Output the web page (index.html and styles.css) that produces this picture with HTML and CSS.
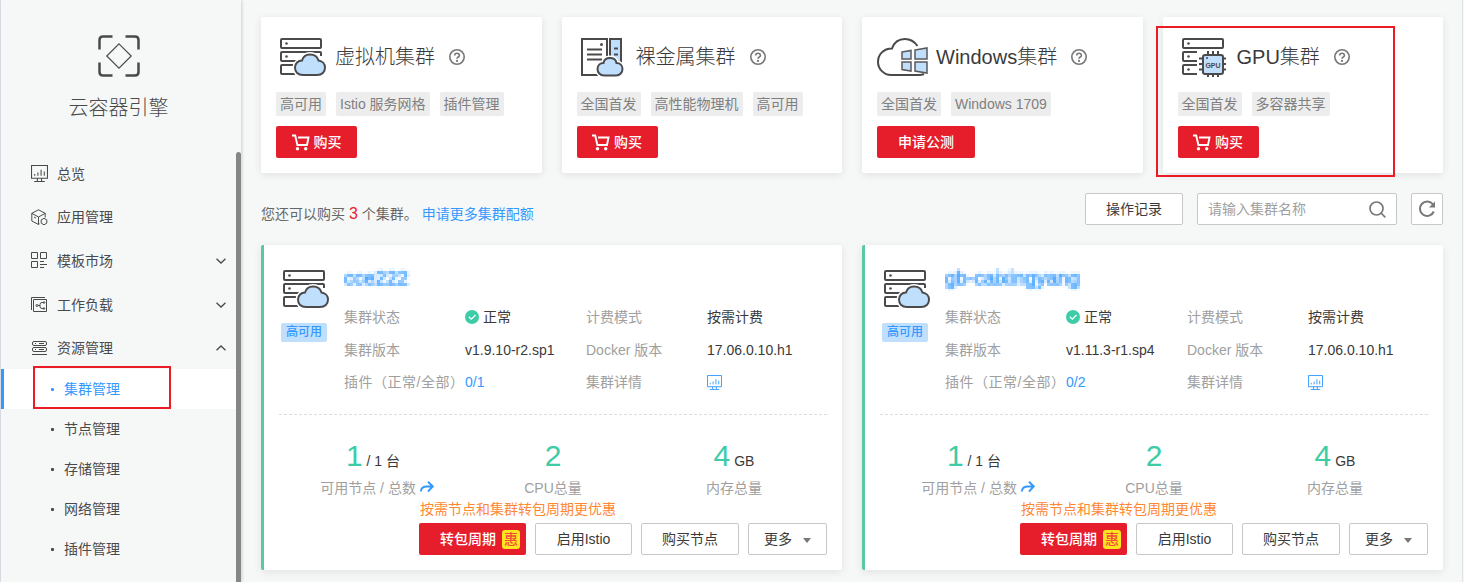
FILE: index.html
```html
<!DOCTYPE html>
<html lang="zh-CN">
<head>
<meta charset="utf-8">
<title>云容器引擎</title>
<link rel="stylesheet" href="styles.css">
</head>
<body>
<svg class="defs" width="0" height="0" aria-hidden="true">
  <filter id="mosaic" x="0" y="0" width="100%" height="100%" color-interpolation-filters="sRGB">
    <feGaussianBlur in="SourceGraphic" stdDeviation="0.8" result="soft"/>
    <feFlood x="1" y="1" width="1" height="1" flood-color="#000" result="dot"/>
    <feOffset in="dot" dx="0" dy="0" x="0" y="0" width="3" height="3"/>
    <feTile result="grid"/>
    <feComposite in="soft" in2="grid" operator="in"/>
    <feMorphology operator="dilate" radius="1"/>
  </filter>
  <symbol id="monitor" viewBox="0 0 16 16">
    <path d="M.5.5h15v12H.5zM6 12.500v2.500M10 12.500v2.500M3 15.500h10M3.500 10V8.500M6.500 10V7M9.500 10V4.500M12.500 10V6" fill="none" stroke="currentColor"/>
  </symbol>
  <symbol id="server-cloud" viewBox="0 0 47 39">
    <g fill="none" stroke="#4a4a4c" stroke-width="2">
      <rect x="2" y="1" width="40" height="9" rx="1"/>
      <path d="M18 23H3q-1 0-1-1v-7q0-1 1-1h38q1 0 1 1v3M14 27H3q-1 0-1 1v7q0 1 1 1h13"/>
    </g>
    <circle cx="7.500" cy="5.500" r="1.300" fill="#4a4a4c"/><circle cx="7.500" cy="18.500" r="1.300" fill="#4a4a4c"/>
    <path d="M24 37c-5 0-8-3-8-7.500 0-4 3-7 7-7 1-3.500 4-6 8-6 4.500 0 7.500 2.500 8.500 6 4 .5 6.500 3.500 6.500 7 0 4.500-3 7.500-8 7.500z" fill="#fff" stroke="#fff" stroke-width="5"/>
    <path d="M24 37c-5 0-8-3-8-7.500 0-4 3-7 7-7 1-3.500 4-6 8-6 4.500 0 7.500 2.500 8.500 6 4 .5 6.500 3.500 6.500 7 0 4.500-3 7.500-8 7.500z" fill="#c0dffd" stroke="#4a4a4c" stroke-width="2"/>
  </symbol>
  <symbol id="metal" viewBox="0 0 47 39">
    <path d="M2 1h25v36H2zM30 1h11v34H30z" fill="#fff" stroke="#4a4a4c" stroke-width="2"/>
    <path d="M31 2h9v32h-9z" fill="#c0dffd"/>
    <path d="M7 11.500h15M7 16.500h15M7 21.500h15M34 10.500h4M34 16.500h4" stroke="#4a4a4c" stroke-width="2"/>
    <circle cx="21.500" cy="6.500" r="1.500" fill="#4a4a4c"/>
    <path d="M24 37.500c-4 0-6.500-3-6.500-6.500s2.500-6 6-6c.5-3 3-5 6.500-5s6 2 6.500 5c3.500 0 6 2.500 6 6s-2.500 6.500-6.500 6.500z" fill="#fff" stroke="#fff" stroke-width="5"/>
    <path d="M24 37.500c-4 0-6.500-3-6.500-6.500s2.500-6 6-6c.5-3 3-5 6.500-5s6 2 6.500 5c3.500 0 6 2.500 6 6s-2.500 6.500-6.500 6.500z" fill="#c0dffd" stroke="#4a4a4c" stroke-width="2"/>
  </symbol>
  <symbol id="windows" viewBox="0 0 51 39">
    <path d="M47 36q-2 1-5 1H14C7 37 1 31 1 24c0-7 5-13.500 14-13.500C17 4.500 22 1 28 1c5 0 9 2 12.500 7" fill="none" stroke="#4a4a4c" stroke-width="2"/>
    <path d="M25 14l9-1.500V21h-9zM38 12l12-2v11H38zM25 24h9v9l-9-1.500zM38 24h12v11l-12-2z" fill="#c0dffd" stroke="#5a5a5c" stroke-width="1.500"/>
  </symbol>
  <symbol id="help" viewBox="0 0 16 16">
    <circle cx="8" cy="8" r="7.200" fill="none" stroke="#777" stroke-width="1.600"/>
    <path d="M5.700 6.500C5.700 3.500 10.500 3.500 10.400 6.400 10.400 8 8 8 8 9.800" fill="none" stroke="#777" stroke-width="1.600"/><circle cx="8" cy="11.900" r="1.100" fill="#777"/>
  </symbol>
  <symbol id="cart" viewBox="0 0 18 17">
    <path d="M0 1.500h3.200L5.400 11H15l1.500-7.500H6" fill="none" stroke="#fff" stroke-width="1.900"/><circle cx="5.500" cy="14.800" r="1.700" fill="#fff"/><circle cx="13.700" cy="14.800" r="1.700" fill="#fff"/>
  </symbol>
  <symbol id="chevron" viewBox="0 0 10 6"><path d="M.5.7L5 5 9.500.7" fill="none" stroke="#4a4a4c" stroke-width="1.300"/></symbol>
  <symbol id="check" viewBox="0 0 14 14"><circle cx="7" cy="7" r="7" fill="#3dcca6"/><path d="M3.800 6.800L6.300 9.200 10.500 5" fill="none" stroke="#fff" stroke-width="1.200"/></symbol>
  <symbol id="share" viewBox="0 0 14 12"><path d="M.9 10.500C1 6.500 4 5.500 7 5.500h5.500M8 .8l4.800 4.700L8 10.500" fill="none" stroke="#3399ff" stroke-width="1.900"/></symbol>
</svg>

<div class="page">
  <aside class="sidebar">
    <div class="brand">
      <svg width="42" height="42" viewBox="0 0 42 42" fill="none" stroke="#4a4a4c"><path d="M1.500 14.500V5q0-3.500 3.500-3.500h9.500M27.500 1.500H37q3.500 0 3.500 3.500v9.500M40.500 27.500V37q0 3.500-3.500 3.500h-9.500M14.500 40.500H5q-3.500 0-3.500-3.500v-9.500" stroke-width="2.500"/><path d="M21 8.800L33.200 21 21 33.200 8.800 21z" stroke-width="1.200"/></svg>
      <h1>云容器引擎</h1>
    </div>
    <nav class="menu">
      <a class="item"><svg width="17" height="17"><use href="#monitor"/></svg><span>总览</span></a>
      <a class="item"><svg width="17" height="17" viewBox="0 0 17 17" fill="none" stroke="#4a4a4c"><path d="M8.500 14.800L7.500 15.500.8 12V4.300L7.500.8l6.700 3.500v4.200M.8 4.300L7.500 8l6.700-3.700M7.500 8v7.500M3 8l2 1.200"/><path d="M13 9.300l2.800 1.600v3.200L13 15.800l-2.800-1.700v-3.200z"/></svg><span>应用管理</span></a>
      <a class="item"><svg width="17" height="17" viewBox="0 0 17 17" fill="none" stroke="#4a4a4c"><path d="M.5.500h6v6h-6zM9.500.500h6v6h-6zM.5 9.500h6v6h-6zM9 9.500h4M9 12.500h7M9 15.500h4"/></svg><span>模板市场</span><svg class="arrow" width="10" height="6"><use href="#chevron"/></svg></a>
      <a class="item"><svg width="17" height="17" viewBox="0 0 17 17" fill="none" stroke="#4a4a4c"><path d="M.5 14V1.500H14M2.500 3.500h13v12h-13zM7 9.500h2M13 6.500h-2q-2 0-2 2v2q0 2 2 2h2"/><circle cx="6" cy="9.500" r="1"/><circle cx="13" cy="6.500" r=".8"/><circle cx="13" cy="12.500" r=".8"/></svg><span>工作负载</span><svg class="arrow" width="10" height="6"><use href="#chevron"/></svg></a>
      <a class="item"><svg width="17" height="17" viewBox="0 0 17 17" fill="none" stroke="#4a4a4c"><rect x="1.500" y="1.500" width="14" height="4" rx="1.500"/><rect x="1.500" y="7.500" width="14" height="4" rx="1.500"/><path d="M1 14.500h15M4 3.500h1M8 3.500h5M4 9.500h1M8 9.500h5"/></svg><span>资源管理</span><svg class="arrow up" width="10" height="6"><use href="#chevron"/></svg></a>
      <a class="sub active"><i></i>集群管理<b class="mark mark-menu"></b></a>
      <a class="sub"><i></i>节点管理</a>
      <a class="sub"><i></i>存储管理</a>
      <a class="sub"><i></i>网络管理</a>
      <a class="sub"><i></i>插件管理</a>
    </nav>
    <div class="scrollbar"></div>
  </aside>

  <main class="main">
    <section class="products">
      <article class="product">
        <header><svg width="47" height="39"><use href="#server-cloud"/></svg><h2>虚拟机集群</h2><svg class="help" width="16" height="16"><use href="#help"/></svg></header>
        <div class="tags"><span>高可用</span><span>Istio 服务网格</span><span>插件管理</span></div>
        <button class="buy"><svg width="18" height="17"><use href="#cart"/></svg>购买</button>
      </article>
      <article class="product">
        <header><svg width="47" height="39"><use href="#metal"/></svg><h2>裸金属集群</h2><svg class="help" width="16" height="16"><use href="#help"/></svg></header>
        <div class="tags"><span>全国首发</span><span>高性能物理机</span><span>高可用</span></div>
        <button class="buy"><svg width="18" height="17"><use href="#cart"/></svg>购买</button>
      </article>
      <article class="product">
        <header class="wide"><svg width="51" height="39"><use href="#windows"/></svg><h2>Windows集群</h2><svg class="help" width="16" height="16"><use href="#help"/></svg></header>
        <div class="tags"><span>全国首发</span><span>Windows 1709</span></div>
        <button class="buy apply">申请公测</button>
      </article>
      <article class="product">
        <header>
          <svg width="47" height="39" viewBox="0 0 47 39">
            <g fill="none" stroke="#4a4a4c" stroke-width="2">
              <rect x="2" y="1" width="40" height="9" rx="1"/>
              <path d="M16 14H3q-1 0-1 1v7q0 1 1 1h13M16 27H3q-1 0-1 1v7q0 1 1 1h13"/>
              <path d="M27 13v26M32 13v26M37 13v26M18 20.500h27M18 26h27M18 31.500h27"/>
              <rect x="22" y="17" width="20" height="19" rx="2" fill="#c0dffd"/>
            </g>
            <g fill="#4a4a4c"><circle cx="7.500" cy="5.500" r="1.300"/><circle cx="7.500" cy="18.500" r="1.300"/><circle cx="7.500" cy="31.500" r="1.300"/><circle cx="26" cy="20" r="1"/></g>
            <text x="32" y="30" class="chip-text">GPU</text>
          </svg>
          <h2>GPU集群</h2><svg class="help" width="16" height="16"><use href="#help"/></svg></header>
        <div class="tags"><span>全国首发</span><span>多容器共享</span></div>
        <button class="buy"><svg width="18" height="17"><use href="#cart"/></svg>购买</button>
        <b class="mark mark-gpu"></b>
      </article>
    </section>

    <section class="toolbar">
      <p>您还可以购买 <em>3</em> 个集群。<a>申请更多集群配额</a></p>
      <button class="btn">操作记录</button>
      <div class="search"><span>请输入集群名称</span><svg width="17" height="17" viewBox="0 0 17 17" fill="none" stroke="#777" stroke-width="1.700"><circle cx="7.500" cy="7.500" r="6.500"/><path d="M12 12l4.300 4.300"/></svg></div>
      <button class="btn refresh"><svg width="18" height="18" viewBox="0 0 18 18"><path d="M15 4.500A7.200 7.200 0 1 0 15.800 11.500" fill="none" stroke="#777" stroke-width="2"/><path d="M17 1.500v6h-6z" fill="#777"/></svg></button>
    </section>

    <section class="clusters">
      <article class="cluster">
        <div class="info">
          <div class="badge"><svg width="47" height="39"><use href="#server-cloud"/></svg><span>高可用</span></div>
          <div class="detail">
            <h3>cce222</h3>
            <dl>
              <dt>集群状态</dt><dd class="state"><svg width="14" height="14"><use href="#check"/></svg>正常</dd><dt>计费模式</dt><dd>按需计费</dd>
              <dt>集群版本</dt><dd>v1.9.10-r2.sp1</dd><dt>Docker 版本</dt><dd>17.06.0.10.h1</dd>
              <dt class="plugin">插件（正常/全部）</dt><dd class="link">0/1</dd><dt>集群详情</dt><dd class="link"><svg width="15" height="15"><use href="#monitor"/></svg></dd>
            </dl>
          </div>
        </div>
        <div class="stats">
          <div><p class="first"><strong>1</strong> / 1 台</p><label>可用节点 / 总数 <svg width="14" height="12"><use href="#share"/></svg></label></div>
          <div><p><strong>2</strong></p><label>CPU总量</label></div>
          <div><p><strong>4</strong> GB</p><label>内存总量</label></div>
        </div>
        <div class="promo">按需节点和集群转包周期更优惠</div>
        <div class="actions"><button class="btn primary">转包周期<i>惠</i></button><button class="btn istio">启用Istio</button><button class="btn">购买节点</button><button class="btn more">更多<i></i></button></div>
      </article>
      <article class="cluster">
        <div class="info">
          <div class="badge"><svg width="47" height="39"><use href="#server-cloud"/></svg><span>高可用</span></div>
          <div class="detail">
            <h3>gb-caixingyang</h3>
            <dl>
              <dt>集群状态</dt><dd class="state"><svg width="14" height="14"><use href="#check"/></svg>正常</dd><dt>计费模式</dt><dd>按需计费</dd>
              <dt>集群版本</dt><dd>v1.11.3-r1.sp4</dd><dt>Docker 版本</dt><dd>17.06.0.10.h1</dd>
              <dt class="plugin">插件（正常/全部）</dt><dd class="link">0/2</dd><dt>集群详情</dt><dd class="link"><svg width="15" height="15"><use href="#monitor"/></svg></dd>
            </dl>
          </div>
        </div>
        <div class="stats">
          <div><p class="first"><strong>1</strong> / 1 台</p><label>可用节点 / 总数 <svg width="14" height="12"><use href="#share"/></svg></label></div>
          <div><p><strong>2</strong></p><label>CPU总量</label></div>
          <div><p><strong>4</strong> GB</p><label>内存总量</label></div>
        </div>
        <div class="promo">按需节点和集群转包周期更优惠</div>
        <div class="actions"><button class="btn primary">转包周期<i>惠</i></button><button class="btn istio">启用Istio</button><button class="btn">购买节点</button><button class="btn more">更多<i></i></button></div>
      </article>
    </section>
  </main>
</div>
</body>
</html>
```
FILE: styles.css
```css
* { box-sizing: border-box; }
body, h1, h2, h3, p, dl, dd { margin: 0; }
body {
  font: 400 14px/20px "Liberation Sans", "Noto Sans CJK SC", sans-serif;
  color: #3a3a3a;
  background: #f6f8f8;
  overflow: hidden;
}
h1, h2, h3, strong { font-weight: 300; }
i, em { font-style: normal; }
svg { flex: none; display: block; }
button { font: inherit; color: inherit; padding: 0; white-space: nowrap; }
.defs { position: absolute; }
.page { display: flex; height: 582px; border-left: 1px solid #dfe1e8; }

.sidebar {
  position: relative;
  width: 240px;
  flex: none;
  color: #4a4a4c;
  box-shadow: 1px 0 3px rgba(0, 0, 0, .16);
}
.brand {
  height: 151px;
  padding: 35px 5px 0 0;
  display: flex;
  flex-direction: column;
  align-items: center;
}
.brand h1 { margin-top: 16px; font-size: 20px; line-height: 30px; }
.menu { width: 235px; }
.item { display: flex; align-items: center; height: 43.6px; padding: 2px 10px 0 30px; }
.item span { margin-left: 9px; flex: 1; }
.up { transform: rotate(180deg); }
.sub { display: flex; align-items: center; height: 40px; padding-left: 50px; position: relative; }
.sub i { width: 3px; height: 3px; margin: 1px 10px 0 0; border-radius: 1px; background: currentColor; }
.active { color: #3399ff; background: #fff; border-left: 3px solid #3399ff; padding-left: 47px; }
.scrollbar {
  position: absolute;
  top: 152px;
  right: 0;
  width: 5px;
  height: 430px;
  border-radius: 3px 3px 0 0;
  background: #868686;
}
.mark { position: absolute; border: 2px solid #eb1c26; }
.mark-menu { left: 29px; top: -3px; width: 138px; height: 43px; }
.mark-gpu { left: -7px; top: 9px; width: 239px; height: 151px; }

.main { width: 1222px; flex: none; padding: 17px 19px 0 20px; border-right: 1px solid #e1e4e6; }
.products { display: grid; grid-template-columns: repeat(4, 280.5px); gap: 20px; }
.product, .cluster {
  background: #fff;
  border-radius: 2px;
  box-shadow: 0 2px 8px rgba(0, 0, 0, .09);
}
.product { position: relative; height: 156px; padding: 20px 15px 0; }
.product header { display: flex; align-items: center; height: 40px; padding-left: 3px; }
.product header.wide { padding-left: 0; }
.product h2 { margin: 0 14px 0 9px; font-size: 20px; line-height: 30px; }
.product .wide h2 { margin-left: 8px; }
.tags { display: flex; gap: 10px; margin-top: 15px; }
.tags span { height: 24px; padding: 0 4px; line-height: 24px; color: #808080; background: #ededed; border-radius: 2px; }
.buy {
  display: flex;
  align-items: center;
  justify-content: center;
  gap: 4px;
  width: 81px;
  height: 32px;
  margin-top: 10px;
  color: #fff;
  background: #e61e2b;
  border: 0;
  border-radius: 2px;
  font-weight: 500;
}
.apply { width: 98px; }
.chip-text { font: 700 7px "Liberation Sans", sans-serif; fill: #4a4a4c; text-anchor: middle; }

.toolbar { display: flex; height: 32px; margin: 20px 0; }
.toolbar p { margin-right: auto; padding-top: 11px; color: #666; }
.toolbar em { color: #e61e2b; font-size: 16px; }
.toolbar a { margin-left: 4px; color: #3399ff; }
.btn {
  height: 32px;
  width: 98px;
  background: #fff;
  border: 1px solid #c5c7c9;
  border-radius: 2px;
}
.search {
  display: flex;
  align-items: center;
  justify-content: space-between;
  width: 200px;
  margin: 0 14px;
  padding: 0 10px;
  color: #a0a0a0;
  background: #fff;
  border: 1px solid #c5c7c9;
  border-radius: 2px;
}
.refresh { display: flex; align-items: center; justify-content: center; width: 32px; }

.clusters { display: grid; grid-template-columns: 581px 581px; gap: 20px; }
.cluster { height: 325px; border-left: 3px solid #5ac8a0; }
.info { display: flex; height: 170px; margin: 0 15px; padding-top: 25px; border-bottom: 1px dashed #ddd; }
.badge { flex: none; width: 65px; padding-left: 2px; }
.badge svg { margin-left: 1px; }
.badge span {
  display: block;
  width: 46px;
  height: 19px;
  margin-top: 14px;
  font-size: 12px;
  font-weight: 500;
  line-height: 18px;
  text-align: center;
  color: #3399ff;
  background: #c0dffd;
  border-radius: 2px;
}
.detail { margin-top: -5px; }
.detail h3 { width: 136px; height: 26px; font-size: 20px; line-height: 26px; font-weight: 400; color: #3399ff; -webkit-text-stroke: .7px #3399ff; filter: url(#mosaic); }
.detail dl { display: grid; grid-template-columns: repeat(4, 121px); grid-auto-rows: 32.5px; align-items: center; margin-top: 10px; white-space: nowrap; }
.detail dt { color: #a0a0a0; }
.detail .plugin { letter-spacing: .5px; }
.state { display: flex; align-items: center; gap: 4px; }
.detail .link { color: #3399ff; }
.stats { display: grid; grid-template-columns: 196px 156px 206px; margin: 21px 5px 0 15px; height: 62px; text-align: center; }
.stats p { height: 42px; line-height: 40px; }
.stats .first { padding-right: 8px; }
.stats strong { font-size: 30px; color: #3dcca6; }
.stats label { color: #a0a0a0; }
.stats svg { display: inline-block; }
.promo { padding-left: 156px; height: 25px; line-height: 22px; color: #ff8833; }
.actions { display: flex; gap: 9px; justify-content: flex-end; padding-right: 15px; }
.actions .primary { display: flex; align-items: center; padding-left: 21px; gap: 6px; width: 107px; border: 0; color: #fff; background: #e61e2b; font-weight: 500; }
.primary i { width: 18px; height: 19px; line-height: 19px; color: #f44c3a; background: #fce61f; border-radius: 3px; }
.actions .istio { width: 97px; }
.actions .more { display: flex; align-items: center; justify-content: center; gap: 11px; width: 79px; }
.more i { border: 4px solid transparent; border-top: 5px solid #777; border-bottom: 0; margin-top: 2px; }
```
